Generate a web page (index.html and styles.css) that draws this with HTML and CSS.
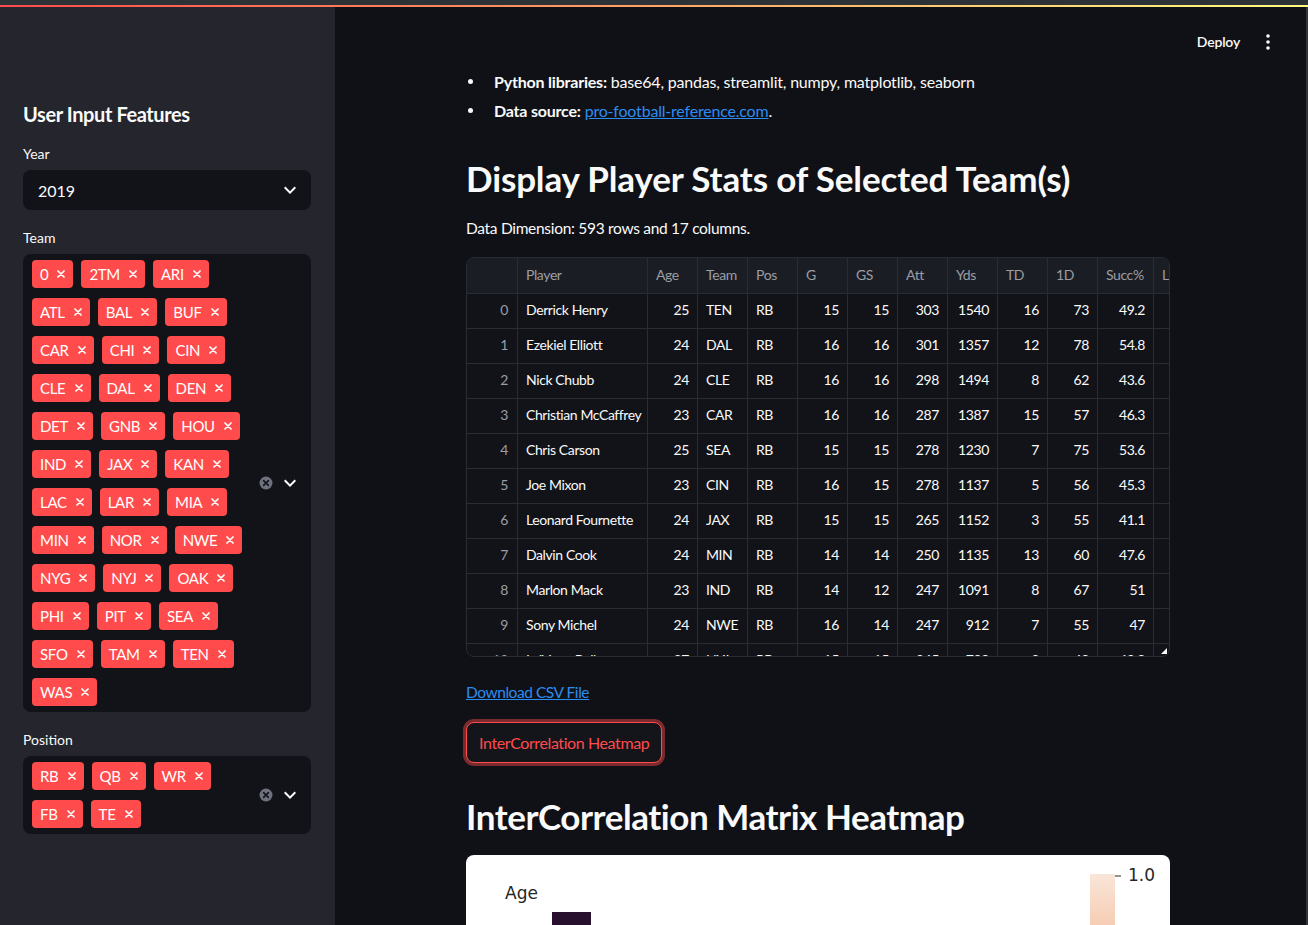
FILE: index.html
```html
<!DOCTYPE html>
<html lang="en">
<head>
<meta charset="utf-8">
<title>NFL Football Stats (Rushing) Explorer</title>
<link rel="stylesheet" href="styles.css">
</head>
<body>
<svg class="defs" width="0" height="0" aria-hidden="true">
  <symbol id="tagx" viewBox="0 0 8 8"><path d="M1 1L7 7M7 1L1 7" fill="none" stroke="#fff" stroke-width="1.7" stroke-linecap="round"/></symbol>
  <symbol id="chev" viewBox="0 0 24 24"><path d="M16.59 8.59L12 13.17 7.41 8.59 6 10l6 6 6-6z" fill="#fafafa"/></symbol>
  <symbol id="clr" viewBox="0 0 14 14"><circle cx="7" cy="7" r="6.5" fill="#6f717c"/><path d="M4.6 4.6L9.4 9.4M9.4 4.6L4.6 9.4" stroke="#15161b" stroke-width="1.6" stroke-linecap="round"/></symbol>
</svg>
<div class="chrome"></div>
<div class="deco"></div>
<div class="app">
  <aside class="sidebar">
    <h2 class="side-title">User Input Features</h2>
    <div class="field">
      <div class="label">Year</div>
      <div class="select">
        <span>2019</span>
        <svg class="chev"><use href="#chev"/></svg>
      </div>
    </div>
    <div class="field">
      <div class="label">Team</div>
      <div class="multi">
        <div class="tags">
          <span class="tag">0<svg><use href="#tagx"/></svg></span>
          <span class="tag">2TM<svg><use href="#tagx"/></svg></span>
          <span class="tag">ARI<svg><use href="#tagx"/></svg></span>
          <span class="tag">ATL<svg><use href="#tagx"/></svg></span>
          <span class="tag">BAL<svg><use href="#tagx"/></svg></span>
          <span class="tag">BUF<svg><use href="#tagx"/></svg></span>
          <span class="tag">CAR<svg><use href="#tagx"/></svg></span>
          <span class="tag">CHI<svg><use href="#tagx"/></svg></span>
          <span class="tag">CIN<svg><use href="#tagx"/></svg></span>
          <span class="tag">CLE<svg><use href="#tagx"/></svg></span>
          <span class="tag">DAL<svg><use href="#tagx"/></svg></span>
          <span class="tag">DEN<svg><use href="#tagx"/></svg></span>
          <span class="tag">DET<svg><use href="#tagx"/></svg></span>
          <span class="tag">GNB<svg><use href="#tagx"/></svg></span>
          <span class="tag">HOU<svg><use href="#tagx"/></svg></span>
          <span class="tag">IND<svg><use href="#tagx"/></svg></span>
          <span class="tag">JAX<svg><use href="#tagx"/></svg></span>
          <span class="tag">KAN<svg><use href="#tagx"/></svg></span>
          <span class="tag">LAC<svg><use href="#tagx"/></svg></span>
          <span class="tag">LAR<svg><use href="#tagx"/></svg></span>
          <span class="tag">MIA<svg><use href="#tagx"/></svg></span>
          <span class="tag">MIN<svg><use href="#tagx"/></svg></span>
          <span class="tag">NOR<svg><use href="#tagx"/></svg></span>
          <span class="tag">NWE<svg><use href="#tagx"/></svg></span>
          <span class="tag">NYG<svg><use href="#tagx"/></svg></span>
          <span class="tag">NYJ<svg><use href="#tagx"/></svg></span>
          <span class="tag">OAK<svg><use href="#tagx"/></svg></span>
          <span class="tag">PHI<svg><use href="#tagx"/></svg></span>
          <span class="tag">PIT<svg><use href="#tagx"/></svg></span>
          <span class="tag">SEA<svg><use href="#tagx"/></svg></span>
          <span class="tag">SFO<svg><use href="#tagx"/></svg></span>
          <span class="tag">TAM<svg><use href="#tagx"/></svg></span>
          <span class="tag">TEN<svg><use href="#tagx"/></svg></span>
          <span class="tag">WAS<svg><use href="#tagx"/></svg></span>
        </div>
        <div class="icons">
          <svg class="clr"><use href="#clr"/></svg>
          <svg class="chev"><use href="#chev"/></svg>
        </div>
      </div>
    </div>
    <div class="field">
      <div class="label">Position</div>
      <div class="multi">
        <div class="tags">
          <span class="tag">RB<svg><use href="#tagx"/></svg></span>
          <span class="tag">QB<svg><use href="#tagx"/></svg></span>
          <span class="tag">WR<svg><use href="#tagx"/></svg></span>
          <span class="tag">FB<svg><use href="#tagx"/></svg></span>
          <span class="tag">TE<svg><use href="#tagx"/></svg></span>
        </div>
        <div class="icons">
          <svg class="clr"><use href="#clr"/></svg>
          <svg class="chev"><use href="#chev"/></svg>
        </div>
      </div>
    </div>
  </aside>

  <main class="main">
    <header class="topbar">
      <span class="deploy">Deploy</span>
      <svg class="dots" viewBox="0 0 4 16"><circle cx="2" cy="2" r="1.8"/><circle cx="2" cy="8" r="1.8"/><circle cx="2" cy="14" r="1.8"/></svg>
    </header>
    <div class="block">
      <ul class="bullets">
        <li><span><b>Python libraries:</b> base64, pandas, streamlit, numpy, matplotlib, seaborn</span></li>
        <li><span><b>Data source:</b> <a href="#">pro-football-reference.com</a>.</span></li>
      </ul>
      <h2 class="title title1">Display Player Stats of Selected Team(s)</h2>
      <p class="text">Data Dimension: 593 rows and 17 columns.</p>

      <div class="df">
        <div class="row head"><div></div><div>Player</div><div>Age</div><div>Team</div><div>Pos</div><div>G</div><div>GS</div><div>Att</div><div>Yds</div><div>TD</div><div>1D</div><div>Succ%</div><div>Lng</div></div>
        <div class="row"><div class="idx">0</div><div>Derrick Henry</div><div class="n">25</div><div>TEN</div><div>RB</div><div class="n">15</div><div class="n">15</div><div class="n">303</div><div class="n">1540</div><div class="n">16</div><div class="n">73</div><div class="n">49.2</div><div></div></div>
        <div class="row"><div class="idx">1</div><div>Ezekiel Elliott</div><div class="n">24</div><div>DAL</div><div>RB</div><div class="n">16</div><div class="n">16</div><div class="n">301</div><div class="n">1357</div><div class="n">12</div><div class="n">78</div><div class="n">54.8</div><div></div></div>
        <div class="row"><div class="idx">2</div><div>Nick Chubb</div><div class="n">24</div><div>CLE</div><div>RB</div><div class="n">16</div><div class="n">16</div><div class="n">298</div><div class="n">1494</div><div class="n">8</div><div class="n">62</div><div class="n">43.6</div><div></div></div>
        <div class="row"><div class="idx">3</div><div>Christian McCaffrey</div><div class="n">23</div><div>CAR</div><div>RB</div><div class="n">16</div><div class="n">16</div><div class="n">287</div><div class="n">1387</div><div class="n">15</div><div class="n">57</div><div class="n">46.3</div><div></div></div>
        <div class="row"><div class="idx">4</div><div>Chris Carson</div><div class="n">25</div><div>SEA</div><div>RB</div><div class="n">15</div><div class="n">15</div><div class="n">278</div><div class="n">1230</div><div class="n">7</div><div class="n">75</div><div class="n">53.6</div><div></div></div>
        <div class="row"><div class="idx">5</div><div>Joe Mixon</div><div class="n">23</div><div>CIN</div><div>RB</div><div class="n">16</div><div class="n">15</div><div class="n">278</div><div class="n">1137</div><div class="n">5</div><div class="n">56</div><div class="n">45.3</div><div></div></div>
        <div class="row"><div class="idx">6</div><div>Leonard Fournette</div><div class="n">24</div><div>JAX</div><div>RB</div><div class="n">15</div><div class="n">15</div><div class="n">265</div><div class="n">1152</div><div class="n">3</div><div class="n">55</div><div class="n">41.1</div><div></div></div>
        <div class="row"><div class="idx">7</div><div>Dalvin Cook</div><div class="n">24</div><div>MIN</div><div>RB</div><div class="n">14</div><div class="n">14</div><div class="n">250</div><div class="n">1135</div><div class="n">13</div><div class="n">60</div><div class="n">47.6</div><div></div></div>
        <div class="row"><div class="idx">8</div><div>Marlon Mack</div><div class="n">23</div><div>IND</div><div>RB</div><div class="n">14</div><div class="n">12</div><div class="n">247</div><div class="n">1091</div><div class="n">8</div><div class="n">67</div><div class="n">51</div><div></div></div>
        <div class="row"><div class="idx">9</div><div>Sony Michel</div><div class="n">24</div><div>NWE</div><div>RB</div><div class="n">16</div><div class="n">14</div><div class="n">247</div><div class="n">912</div><div class="n">7</div><div class="n">55</div><div class="n">47</div><div></div></div>
        <div class="row"><div class="idx">10</div><div>Le'Veon Bell</div><div class="n">27</div><div>NYJ</div><div>RB</div><div class="n">15</div><div class="n">15</div><div class="n">245</div><div class="n">789</div><div class="n">3</div><div class="n">48</div><div class="n">40.8</div><div></div></div>
      </div>

      <a class="download" href="#">Download CSV File</a>
      <div><button class="btn" type="button">InterCorrelation Heatmap</button></div>

      <h2 class="title title2">InterCorrelation Matrix Heatmap</h2>
      <div class="figure">
        <svg class="plot" width="704" height="120" viewBox="0 0 704 120">
          <defs>
            <linearGradient id="cbar" x1="0" y1="0" x2="0" y2="1">
              <stop offset="0" stop-color="#f9e6d9"/>
              <stop offset="1" stop-color="#f3b089"/>
            </linearGradient>
          </defs>
          <text x="39" y="44" class="mpl">Age</text>
          <rect x="86" y="57" width="39" height="70" fill="#26102e"/>
          <rect x="624" y="19" width="25" height="110" fill="url(#cbar)"/>
          <line x1="649" y1="21" x2="655" y2="21" stroke="#262626" stroke-width="1.2"/>
          <text x="662" y="26" class="mpl">1.0</text>
        </svg>
      </div>
    </div>
  </main>
  <div class="edge"></div>
</div>
</body>
</html>
```
FILE: styles.css
```css
* { box-sizing: border-box; }
html, body { margin: 0; height: 925px; overflow: hidden; }
body {
  background: #0f1116;
  color: #fafafa;
  font-family: "Lato", "Liberation Sans", sans-serif;
}
.defs { position: absolute; width: 0; height: 0; }

.chrome { height: 5px; background: #2d3237; }
.deco { height: 2px; background: linear-gradient(90deg, #ff4b4b, #fffd80); }

.app { display: flex; height: 918px; }

/* ---------- sidebar ---------- */
.sidebar {
  width: 335px;
  flex: none;
  background: #24252d;
  padding: 95px 24px 0 23px;
}
.side-title {
  margin: 0 0 17px;
  font-size: 20px;
  line-height: 24px;
  font-weight: 700;
  letter-spacing: -0.4px;
}
.field { margin-bottom: 17px; }
.label {
  font-size: 14px;
  line-height: 22px;
  margin-bottom: 5px;
}
.select {
  height: 40px;
  border-radius: 8px;
  background: #111318;
  display: flex;
  align-items: center;
  justify-content: space-between;
  padding: 0 9px 0 15px;
  font-size: 16px;
}
.chev { width: 24px; height: 24px; display: block; }
.clr { width: 14px; height: 14px; display: block; }

.multi {
  border-radius: 8px;
  background: #111318;
  display: flex;
  align-items: center;
  padding: 6px 9px 6px 9px;
}
.tags {
  width: 222px;
  display: flex;
  flex-wrap: wrap;
  gap: 10px 8px;
}
.tag {
  height: 28px;
  display: inline-flex;
  align-items: center;
  gap: 9px;
  padding: 0 8px;
  border-radius: 4px;
  background: #ff4b4b;
  color: #fff;
  font-size: 15px;
  letter-spacing: -0.3px;
}
.tag svg { width: 8px; height: 8px; display: block; }
.icons {
  margin-left: auto;
  display: flex;
  align-items: center;
  gap: 5px;
}

/* ---------- main ---------- */
.main {
  flex: 1;
  display: flex;
  flex-direction: column;
  padding-right: 5px;
}
.edge { width: 2px; flex: none; background: #33353b; }
.topbar {
  height: 62px;
  flex: none;
  padding: 23px 31px 0 0;
  display: flex;
  justify-content: flex-end;
  align-items: flex-start;
  gap: 26px;
}
.deploy {
  font-size: 14px;
  line-height: 24px;
  font-weight: 600;
  letter-spacing: -0.2px;
}
.dots { width: 4px; height: 16px; margin-top: 4px; fill: #fafafa; }

.block { width: 704px; margin: 0 auto; }

.bullets { list-style: none; margin: 0; padding: 0; font-size: 16px; letter-spacing: -0.2px; }
.bullets li {
  display: flex;
  align-items: center;
  line-height: 25px;
  margin-bottom: 4px;
}
.bullets li:last-child { margin-bottom: 0; }
.bullets li::before {
  content: "";
  width: 5px;
  height: 5px;
  border-radius: 50%;
  background: #fafafa;
  margin: 0 21px 0 2px;
  flex: none;
}
.bullets b { font-weight: 700; }
a { color: #2d8cf0; }

.title {
  margin: 34px 0 15px;
  font-size: 35px;
  line-height: 43px;
  font-weight: 700;
}
.title1 { letter-spacing: -0.15px; }
.text { margin: 0; font-size: 15.5px; line-height: 26px; letter-spacing: -0.3px; }

/* dataframe */
.df {
  margin-top: 16px;
  width: 704px;
  height: 400px;
  border: 1px solid #2a2c34;
  border-radius: 8px;
  overflow: hidden;
  position: relative;
  font-size: 14px;
  letter-spacing: -0.4px;
  background: #111318;
}
.df::after {
  content: "";
  position: absolute;
  right: 2px;
  bottom: 2px;
  width: 0;
  height: 0;
  border-left: 6px solid transparent;
  border-bottom: 6px solid #fafafa;
}
.row {
  display: grid;
  grid-template-columns: 51px 130px repeat(9, 50px) 56px 90px;
  height: 35px;
}
.row.head { height: 36px; background: #1b1d24; color: #9c9ea5; }
.row > div {
  border-right: 1px solid #2a2c34;
  border-bottom: 1px solid #2a2c34;
  padding: 0 8px 3px;
  display: flex;
  align-items: center;
  white-space: nowrap;
  overflow: hidden;
}
.row > .n { justify-content: flex-end; }
.row > .idx { justify-content: flex-end; color: #9c9ea5; padding-right: 9px; }

.download {
  display: block;
  width: max-content;
  margin-top: 23px;
  font-size: 15.5px;
  letter-spacing: -0.45px;
  line-height: 25px;
}
.btn {
  margin-top: 17px;
  height: 41px;
  padding: 0 12px;
  border: 1px solid #ff4b4b;
  border-radius: 8px;
  background: #13151b;
  color: #ff4b4b;
  font-family: inherit;
  font-size: 16px;
  letter-spacing: -0.4px;
  box-shadow: 0 0 0 3px rgba(255, 75, 75, 0.45);
}
.title2 { margin: 32px 0 17px; letter-spacing: -0.45px; }

.figure {
  height: 120px;
  background: #fff;
  border-radius: 8px 8px 0 0;
  overflow: hidden;
}
.plot { display: block; }
.mpl { font-family: "DejaVu Sans", sans-serif; font-size: 17px; fill: #262626; }
```
